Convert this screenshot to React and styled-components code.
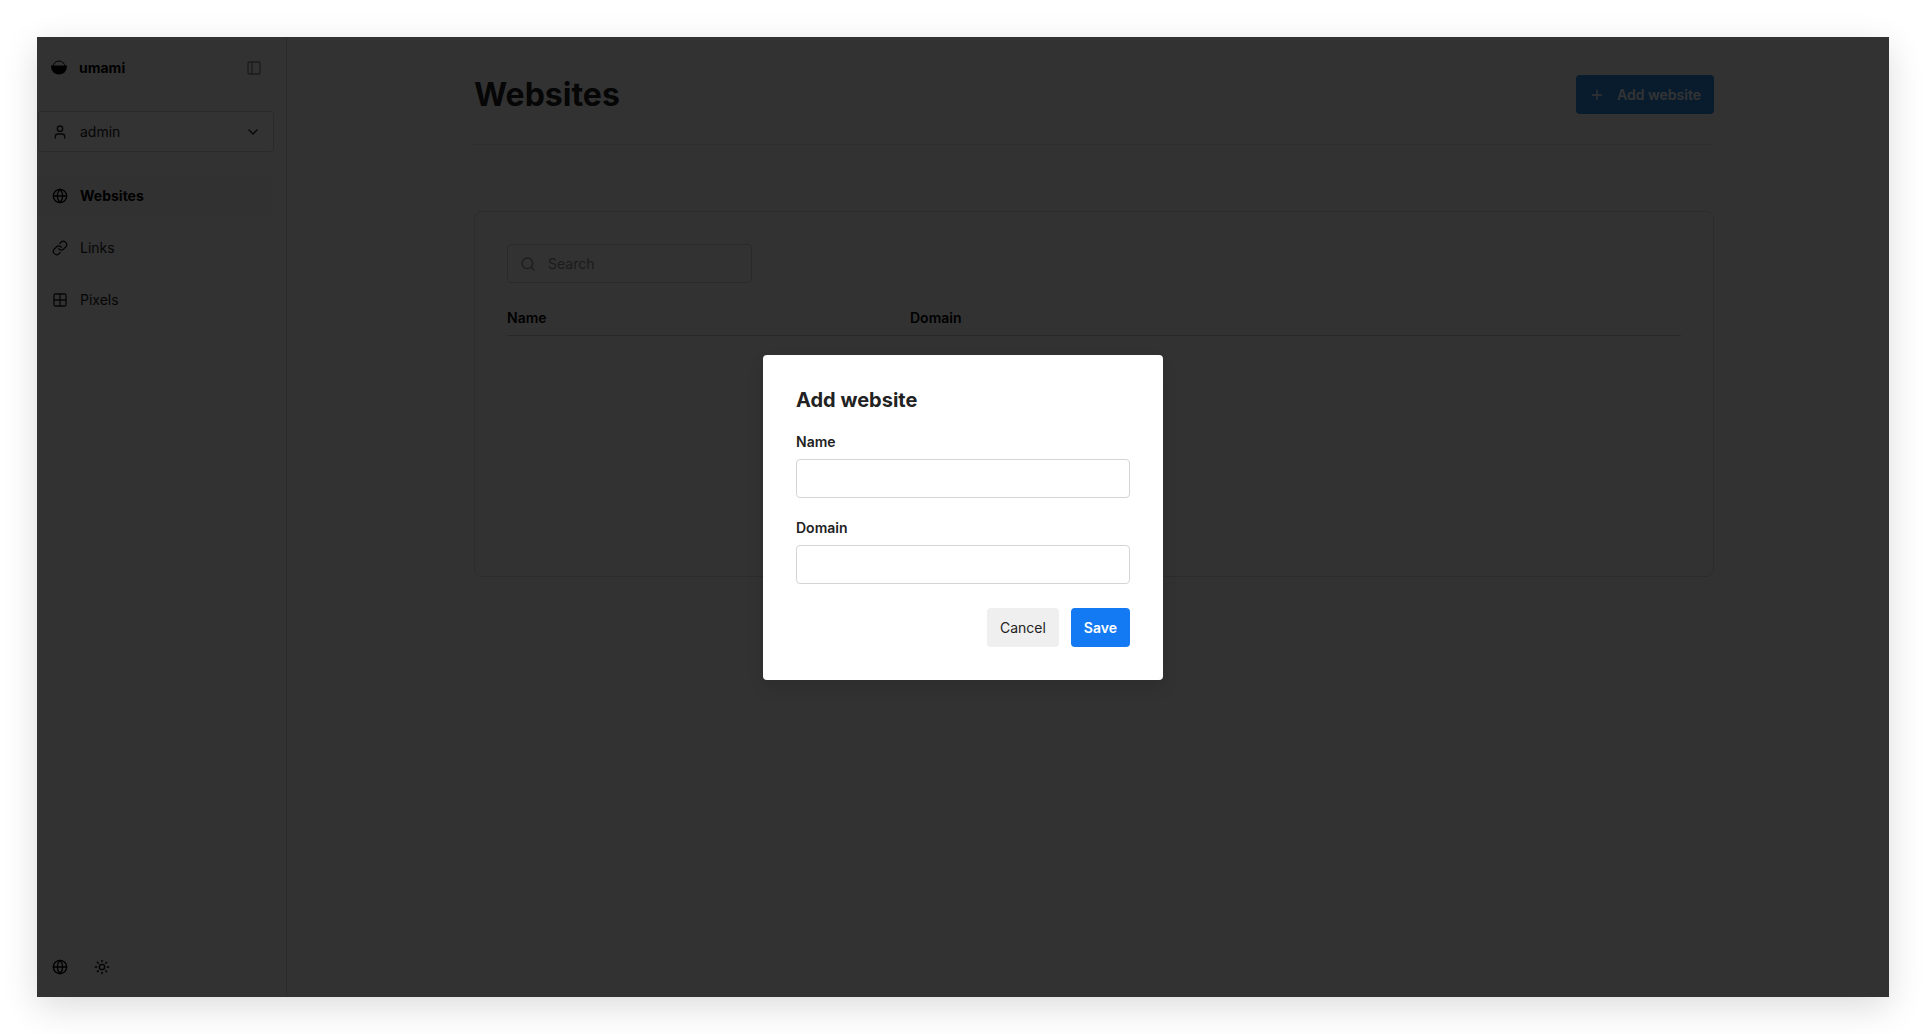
import React from "react";
import styled, { createGlobalStyle } from "styled-components";
import {
  ChevronDown,
  Globe,
  Grid2x2,
  Link,
  PanelLeft,
  Plus,
  Search,
  Sun,
  User,
} from "lucide-react";

const navItems = [
  { label: "Websites", icon: Globe, active: true },
  { label: "Links", icon: Link },
  { label: "Pixels", icon: Grid2x2 },
];

const Logo = () => (
  <svg width="16" height="16" viewBox="0 0 16 16" aria-hidden="true">
    <circle cx="8" cy="7" r="6" fill="none" stroke="currentColor" />
    <path d="M0 5.5h16v1a8 8 0 0 1-16 0z" fill="currentColor" />
  </svg>
);

const Sidebar = () => (
  <Side>
    <Brand>
      <Logo />
      <strong>umami</strong>
      <IconButton aria-label="Collapse sidebar" $muted>
        <PanelLeft size={16} />
      </IconButton>
    </Brand>
    <Account>
      <User size={16} />
      <span>admin</span>
      <ChevronDown size={16} />
    </Account>
    <Nav>
      {navItems.map(({ label, icon: Icon, active }) => (
        <NavLink href="#" key={label} $active={active}>
          <Icon size={16} />
          {label}
        </NavLink>
      ))}
    </Nav>
    <SideFooter>
      <IconButton aria-label="Language">
        <Globe size={16} />
      </IconButton>
      <IconButton aria-label="Theme">
        <Sun size={16} />
      </IconButton>
    </SideFooter>
  </Side>
);

const WebsitesPage = () => (
  <Main>
    <Content>
      <PageHeader>
        <h1>Websites</h1>
        <AddButton $primary>
          <Plus size={16} />
          Add website
        </AddButton>
      </PageHeader>
      <Card>
        <SearchBox>
          <Search size={16} />
          <input type="search" placeholder="Search" aria-label="Search" />
        </SearchBox>
        <Table>
          <thead>
            <tr>
              <th>Name</th>
              <th>Domain</th>
              <th aria-label="Actions"></th>
            </tr>
          </thead>
        </Table>
      </Card>
    </Content>
  </Main>
);

const AddWebsite = () => (
  <Overlay>
    <Dialog role="dialog" aria-labelledby="dialog-title">
      <h2 id="dialog-title">Add website</h2>
      <Field>
        <label htmlFor="name">Name</label>
        <input id="name" type="text" />
      </Field>
      <Field>
        <label htmlFor="domain">Domain</label>
        <input id="domain" type="text" />
      </Field>
      <Actions>
        <Button type="button">Cancel</Button>
        <Button type="button" $primary>
          Save
        </Button>
      </Actions>
    </Dialog>
  </Overlay>
);

const App = () => {
  return (
    <>
      <GlobalStyle />
      <Page>
        <Window>
          <Sidebar />
          <WebsitesPage />
          <AddWebsite />
        </Window>
      </Page>
    </>
  );
};

export default App;

const GlobalStyle = createGlobalStyle`
  * {
    box-sizing: border-box;
  }
  body {
    margin: 0;
    background: #fff;
    color: #222;
    font: 14px/22px Inter, sans-serif;
  }
  button, input {
    font: inherit;
    color: inherit;
  }
  h1, h2 {
    margin: 0;
  }
`;

const Page = styled.div`
  display: flex;
  min-height: 100vh;
  padding: 37px;
`;

const Window = styled.div`
  position: relative;
  display: flex;
  flex: 1;
  background: #fafafa;
  box-shadow: 0 10px 34px rgba(0, 0, 0, 0.14);
`;

const Side = styled.aside`
  display: flex;
  flex-direction: column;
  width: 250px;
  border-right: 1px solid #d5d5d5;
`;

const Brand = styled.div`
  display: flex;
  align-items: center;
  height: 62px;
  padding: 0 20px 0 14px;
  color: #000;
  strong {
    flex: 1;
    margin-left: 12px;
    font-weight: 700;
  }
`;

const IconButton = styled.button`
  display: flex;
  padding: 4px;
  border: 0;
  background: none;
  color: ${({ $muted }) => ($muted ? "#888" : "#000")};
`;

const Account = styled.button`
  display: flex;
  align-items: center;
  gap: 12px;
  height: 41px;
  margin: 12px 12px 0 1px;
  padding: 0 12px 0 13px;
  border: 1px solid #d0d0d0;
  border-radius: 4px;
  background: #fcfcfc;
  text-align: left;
  span {
    flex: 1;
  }
`;

const Nav = styled.nav`
  display: flex;
  flex-direction: column;
  gap: 13px;
  margin: 24px 14px 0 0;
`;

const NavLink = styled.a`
  display: flex;
  align-items: center;
  gap: 12px;
  height: 39px;
  padding: 0 15px;
  border-radius: 4px;
  color: ${({ $active }) => ($active ? "#000" : "#222")};
  background: ${({ $active }) => ($active ? "#f5f5f5" : "none")};
  font-weight: ${({ $active }) => ($active ? 700 : 400)};
  text-decoration: none;
`;

const SideFooter = styled.div`
  display: flex;
  gap: 18px;
  margin-top: auto;
  padding: 0 11px 18px;
`;

const Main = styled.main`
  flex: 1;
  padding: 0 24px 0 36px;
`;

const Content = styled.div`
  max-width: 1240px;
  margin: 0 auto;
`;

const PageHeader = styled.header`
  display: flex;
  align-items: center;
  justify-content: space-between;
  height: 108px;
  padding-top: 8px;
  border-bottom: 1px solid #e4e4e4;
  h1 {
    font-size: 32px;
    line-height: 40px;
    font-weight: 700;
  }
`;

const Button = styled.button`
  display: flex;
  align-items: center;
  gap: 12px;
  height: 39px;
  padding: 1px 13px 0;
  border: 0;
  border-radius: 4px;
  color: ${({ $primary }) => ($primary ? "#fff" : "#222")};
  background: ${({ $primary }) => ($primary ? "#147af3" : "#efefef")};
  font-weight: ${({ $primary }) => ($primary ? 600 : 400)};
`;

const AddButton = styled(Button)`
  background: #288ae6;
`;

const Card = styled.section`
  min-height: 366px;
  margin-top: 66px;
  padding: 32px;
  border: 1px solid #d9d9d9;
  border-radius: 8px;
`;

const SearchBox = styled.div`
  display: flex;
  align-items: center;
  gap: 12px;
  width: 245px;
  height: 39px;
  padding: 0 12px;
  border: 1px solid #d0d0d0;
  border-radius: 4px;
  color: #888;
  svg {
    flex: none;
  }
  input {
    width: 100%;
    padding: 0;
    border: 0;
    background: none;
    outline: 0;
  }
  input::placeholder {
    color: #888;
  }
`;

const Table = styled.table`
  width: 100%;
  margin-top: 18px;
  border-collapse: collapse;
  table-layout: fixed;
  color: #000;
  th {
    padding: 6px 0;
    border-bottom: 1px solid #c8c8c8;
    font-weight: 600;
    text-align: left;
  }
  th:first-child {
    width: 403px;
  }
`;

const Overlay = styled.div`
  position: absolute;
  inset: 0;
  display: flex;
  align-items: center;
  justify-content: center;
  background: rgba(0, 0, 0, 0.8);
`;

const Dialog = styled.form`
  display: flex;
  flex-direction: column;
  gap: 19px;
  width: 400px;
  padding: 33px;
  border-radius: 4px;
  background: #fff;
  box-shadow: 0 8px 16px rgba(0, 0, 0, 0.1);
  h2 {
    font-size: 20px;
    line-height: 24px;
    font-weight: 700;
  }
`;

const Field = styled.div`
  display: flex;
  flex-direction: column;
  gap: 6px;
  label {
    font-weight: 600;
  }
  input {
    height: 39px;
    padding: 0 12px;
    border: 1px solid #d5d5d5;
    border-radius: 4px;
    background: #fff;
  }
`;

const Actions = styled.div`
  display: flex;
  justify-content: flex-end;
  gap: 12px;
  padding-top: 5px;
`;
